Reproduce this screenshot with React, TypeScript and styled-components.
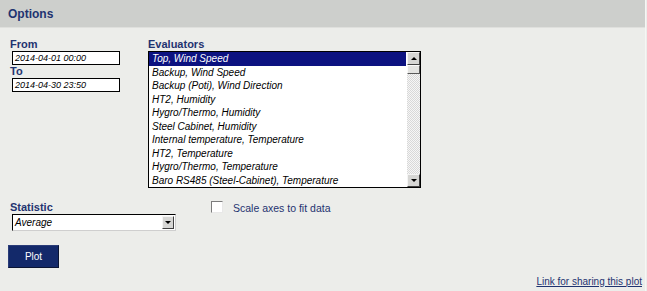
import React from 'react';
import styled, { createGlobalStyle } from 'styled-components';

const evaluators = [
  'Top, Wind Speed',
  'Backup, Wind Speed',
  'Backup (Poti), Wind Direction',
  'HT2, Humidity',
  'Hygro/Thermo, Humidity',
  'Steel Cabinet, Humidity',
  'Internal temperature, Temperature',
  'HT2, Temperature',
  'Hygro/Thermo, Temperature',
  'Baro RS485 (Steel-Cabinet), Temperature',
];

const App = () => {
  return (
    <>
      <GlobalStyle />
      <Panel>
        <Header>Options</Header>
        <Body>
          <TopRow>
            <DateColumn>
              <Label>From</Label>
              <Field>2014-04-01 00:00</Field>
              <Label>To</Label>
              <Field>2014-04-30 23:50</Field>
            </DateColumn>
            <EvalColumn>
              <Label>Evaluators</Label>
              <ListBox>
                <Items>
                  {evaluators.map((e, i) => (
                    <Item key={e} selected={i === 0}>
                      {e}
                    </Item>
                  ))}
                </Items>
                <ScrollBar>
                  <ArrowButton>
                    <Arrow up />
                  </ArrowButton>
                  <Thumb />
                  <Track />
                  <ArrowButton>
                    <Arrow />
                  </ArrowButton>
                </ScrollBar>
              </ListBox>
            </EvalColumn>
          </TopRow>
          <StatRow>
            <StatColumn>
              <Label>Statistic</Label>
              <Select>
                <SelectText>Average</SelectText>
                <SelectButton>
                  <Arrow />
                </SelectButton>
              </Select>
            </StatColumn>
            <CheckLabel>
              <CheckBox />
              Scale axes to fit data
            </CheckLabel>
          </StatRow>
          <PlotButton>Plot</PlotButton>
          <Footer>
            <ShareLink href="#">Link for sharing this plot</ShareLink>
          </Footer>
        </Body>
      </Panel>
    </>
  );
};

const GlobalStyle = createGlobalStyle`
  html, body {
    margin: 0;
    padding: 0;
    background: #ecedea;
  }
  body {
    font-family: "Liberation Sans", Arial, sans-serif;
    color: #1f3370;
  }
`;

const Panel = styled.div`
  width: 645px;
  height: 291px;
  border-right: 1px solid #f6f6f4;
  display: flex;
  flex-direction: column;
`;

const Header = styled.div`
  height: 27px;
  line-height: 29px;
  padding-left: 8px;
  background: #cdcfcc;
  border-bottom: 1px solid #dfe0dd;
  font-size: 12px;
  font-weight: bold;
  color: #1f3370;
`;

const Body = styled.div`
  flex: 1;
  display: flex;
  flex-direction: column;
  padding: 10px 3px 0 8px;
`;

const TopRow = styled.div`
  display: flex;
`;

const DateColumn = styled.div`
  width: 138px;
  padding-left: 2px;
  display: flex;
  flex-direction: column;
`;

const EvalColumn = styled.div`
  display: flex;
  flex-direction: column;
`;

const Label = styled.div`
  font-size: 11px;
  font-weight: bold;
  line-height: 13px;
  height: 13px;
  color: #1f3370;
`;

const Field = styled.div`
  margin-left: 2px;
  width: 104px;
  height: 12px;
  border: 1px solid #000;
  background: #fff;
  font-size: 9px;
  font-style: italic;
  line-height: 12px;
  padding-left: 2px;
  color: #000;
`;

const ListBox = styled.div`
  width: 271px;
  height: 135px;
  border: 1px solid #000;
  background: #fff;
  display: flex;
`;

const Items = styled.div`
  flex: 1;
  display: flex;
  flex-direction: column;
`;

const Item = styled.div<{ selected?: boolean }>`
  height: 13.5px;
  line-height: 13.5px;
  padding-left: 3px;
  font-size: 10px;
  font-style: italic;
  white-space: nowrap;
  color: ${p => (p.selected ? '#fff' : '#000')};
  background: ${p => (p.selected ? '#0c1280' : 'transparent')};
`;

const ScrollBar = styled.div`
  width: 13px;
  display: flex;
  flex-direction: column;
  border-left: 1px solid #fff;
`;

const ArrowButton = styled.div`
  height: 11px;
  background: #d6d6d4;
  border: 1px solid;
  border-color: #f4f4f4 #404040 #404040 #f4f4f4;
  display: flex;
  align-items: center;
  justify-content: center;
`;

const Arrow = styled.div<{ up?: boolean }>`
  width: 0;
  height: 0;
  border-left: 3px solid transparent;
  border-right: 3px solid transparent;
  ${p => (p.up ? 'border-bottom: 3px solid #000;' : 'border-top: 3px solid #000;')}
`;

const Thumb = styled.div`
  height: 7px;
  background: #e4e4e2;
  border: 1px solid;
  border-color: #fafafa #5a5a5a #5a5a5a #fafafa;
`;

const Track = styled.div`
  flex: 1;
  background-color: #f4f4f4;
  background-image: repeating-conic-gradient(#d8d8d8 0 25%, #f6f6f6 0 50%);
  background-size: 2px 2px;
`;

const StatRow = styled.div`
  display: flex;
  margin-top: 13px;
`;

const StatColumn = styled.div`
  width: 201px;
  padding-left: 2px;
  display: flex;
  flex-direction: column;
`;

const Select = styled.div`
  margin-left: 2px;
  width: 162px;
  height: 15px;
  border: 1px solid;
  border-color: #000 #cfcfcf #cfcfcf #000;
  background: #fff;
  display: flex;
  align-items: center;
`;

const SelectText = styled.div`
  flex: 1;
  padding-left: 2px;
  font-size: 10px;
  font-style: italic;
  color: #000;
`;

const SelectButton = styled.div`
  width: 10px;
  height: 11px;
  margin-right: 1px;
  background: #d6d6d4;
  border: 1px solid;
  border-color: #f4f4f4 #404040 #404040 #f4f4f4;
  display: flex;
  align-items: center;
  justify-content: center;
`;

const CheckLabel = styled.label`
  display: flex;
  align-items: flex-start;
  font-size: 10.5px;
  line-height: 14px;
  color: #1f3370;
`;

const CheckBox = styled.span`
  display: inline-block;
  width: 10px;
  height: 10px;
  margin: 0 10px 0 0;
  background: #fff;
  border: 1px solid;
  border-color: #7c7c7c #e8e8e8 #e8e8e8 #7c7c7c;
`;

const PlotButton = styled.button`
  margin-top: 14px;
  width: 51px;
  height: 23px;
  padding: 0;
  background: #13296a;
  border: 1px solid;
  border-color: #2a3c78 #0a1433 #0a1433 #2a3c78;
  color: #fff;
  font-family: "Liberation Sans", Arial, sans-serif;
  font-size: 10px;
`;

const Footer = styled.div`
  display: flex;
  justify-content: flex-end;
  margin-top: 8px;
`;

const ShareLink = styled.a`
  font-size: 10px;
  color: #1f3370;
  text-decoration: underline;
`;

export default App;
